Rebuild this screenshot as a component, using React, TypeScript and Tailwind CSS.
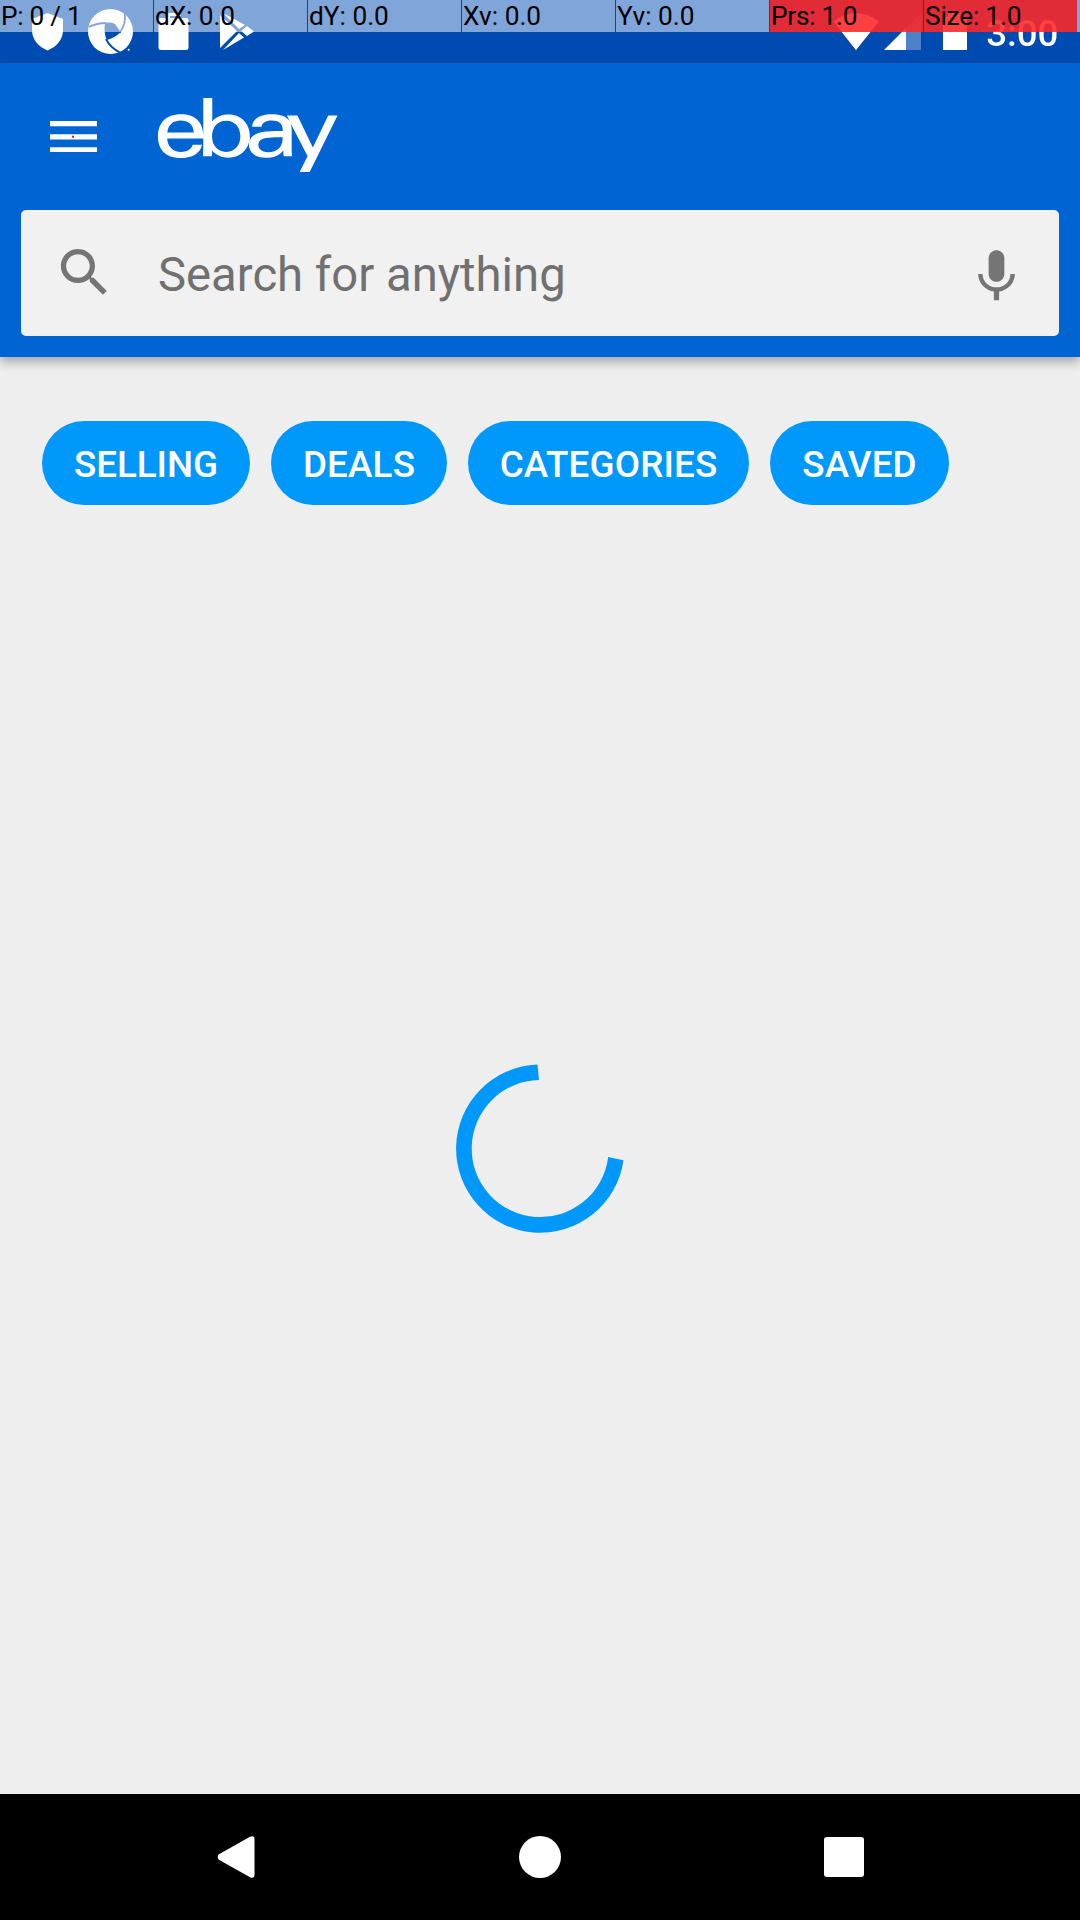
import React from "react";
import { SiEbay } from "react-icons/si";

const metrics = [
  { label: "P: 0 / 1", hot: false, tracking: "tracking-[-0.3px]" },
  { label: "dX: 0.0", hot: false, tracking: "tracking-[-0.1px]" },
  { label: "dY: 0.0", hot: false, tracking: "tracking-normal" },
  { label: "Xv: 0.0", hot: false, tracking: "tracking-normal" },
  { label: "Yv: 0.0", hot: false, tracking: "tracking-normal" },
  { label: "Prs: 1.0", hot: true, tracking: "tracking-[-0.25px]" },
  { label: "Size: 1.0", hot: true, tracking: "tracking-[-0.2px]" },
];

const chips = [
  { label: "SELLING", width: "w-[208px]", tracking: "tracking-normal" },
  { label: "DEALS", width: "w-[176px]", tracking: "tracking-[0.2px]" },
  { label: "CATEGORIES", width: "w-[281px]", tracking: "tracking-[0.15px]" },
  { label: "SAVED", width: "w-[179px]", tracking: "tracking-[0.2px]" },
];

function PointerOverlay() {
  return (
    <div className="absolute inset-x-0 top-0 flex h-8 bg-[#004bb1]">
      {metrics.map((m, i) => (
        <div
          key={m.label}
          className={`${i === 0 ? "w-[153px]" : "ml-px w-[153px]"} h-8 shrink-0 ${m.hot ? "bg-[#e12b36]" : "bg-[#80a5d8]"}`}
        />
      ))}
      <div className="h-8 flex-1 bg-[#80a5d8]" />
    </div>
  );
}

function PointerLabels() {
  return (
    <div className="absolute inset-x-0 top-0 flex h-8 text-[26.25px] leading-8 text-black">
      {metrics.map((m) => (
        <span key={m.label} className={`${m.tracking} w-[154px] shrink-0 whitespace-pre pl-px`}>
          {m.label}
        </span>
      ))}
    </div>
  );
}

function StatusIcons() {
  return (
    <svg className="absolute left-0 top-0 h-[63px] w-[1080px]" viewBox="0 0 1080 63" fill="#fff">
      <defs>
        <linearGradient id="bar" gradientUnits="userSpaceOnUse" x1="0" y1="0" x2="0" y2="64">
          <stop offset="0.5" stopColor="#80a5d8" />
          <stop offset="0.5" stopColor="#004bb1" />
        </linearGradient>
      </defs>
      <path d="M47.5 13L63 19v11c0 9-6 16.500-15.500 20.500C38 46.500 32 39 32 30V19z" />
      <circle cx="110.500" cy="31.500" r="22.500" />
      <path d="M105 22.700Q111 22 115 24L120.700 32Q115 38 106.700 40Q103.500 33 105 22.700z" fill="url(#bar)" />
      <path d="M89 27Q97 23 106 23M124.500 12Q127 23 119.500 33M106 39Q110 47.500 120 52.500" fill="none" stroke="url(#bar)" strokeWidth="1.800" />
      <circle cx="128.700" cy="49.700" r="1" />
      <path d="M166.500 18v-2.500a2.500 2.500 0 0 1 2.500-2.500h9a2.500 2.500 0 0 1 2.500 2.500V18h5.500a2.500 2.500 0 0 1 2.500 2.500v27a2.500 2.500 0 0 1-2.500 2.500h-25a2.500 2.500 0 0 1-2.500-2.500v-27a2.500 2.500 0 0 1 2.500-2.500zM170 18h7v-2h-7z" />
      <path d="M220 15L237 31 220 48zM223 13L245 25 239 29zM241 31L247 26 254 31.500 247 36zM223 50L239 33 244 37.500z" />
      <path d="M833.500 21.500Q856 4.500 879 21.500L856 50z" fill="#ff4042" />
      <path d="M841.700 32h28.700L856 50z" />
      <path d="M921 13v19h-15v-4z" fill="#e8313a" />
      <path d="M902 32h4v-4z" fill="#ff4042" />
      <path d="M884 50l18-18h4v18z" />
      <path d="M906 32h15v18h-15z" fill="#4d81c8" />
      <path d="M943 17h5v-4h14v4h5v15h-24z" fill="#ff4042" />
      <path d="M943 32h24v18h-24z" />
    </svg>
  );
}

export default function App() {
  return (
    <div className="flex h-[1920px] w-[1080px] flex-col overflow-hidden bg-[#eeeeee] font-['Roboto',sans-serif]">
      <div className="relative h-[63px] shrink-0 bg-[#004bb1]">
        <PointerOverlay />
        <StatusIcons />
        <div className="absolute right-[21.5px] top-[12px] bg-linear-to-b from-[#ff4042] from-[20px] to-white to-[20px] bg-clip-text text-[36.75px] font-medium leading-[43px] text-transparent">
          3:00
        </div>
        <PointerLabels />
      </div>

      <header className="relative flex h-[294px] shrink-0 flex-col bg-[#0064d3] shadow-[0_5px_10px_rgba(0,0,0,0.3)]">
        <div className="flex h-[147px] items-start pl-[50px] pt-[35px]">
          <svg className="mt-[22.875px] h-[31.5px] w-[47.25px]" viewBox="0 0 18 12" fill="#fff" role="img" aria-label="Menu">
            <path d="M0 0h18v2H0zM0 5h18v2H0zM0 10h18v2H0z" />
            <path d="M8.400 5.600h.76v.76h-.76z" fill="#f00" />
          </svg>
          <SiEbay className="ml-[60.75px] h-[74px] w-[179.5px] text-white" viewBox="0 7.200 24 9.600" preserveAspectRatio="none" />
        </div>
        <div className="mx-[21px] flex h-[126px] items-center rounded-[5px] bg-[#f1f1f1]">
          <svg className="mb-[2px] ml-[31.5px] size-[63px]" viewBox="0 0 24 24" fill="#757575">
            <path d="M15.500 14h-.79l-.28-.27C15.410 12.590 16 11.110 16 9.500 16 5.910 13.090 3 9.500 3S3 5.910 3 9.500 5.910 16 9.500 16c1.610 0 3.090-.59 4.230-1.570l.27.28v.79l5 4.990L20.490 19l-4.990-5zm-6 0C7.010 14 5 11.990 5 9.500S7.010 5 9.500 5 14 7.010 14 9.500 11.990 14 9.500 14z" />
          </svg>
          <span className="ml-[42.5px] mt-[4px] flex-1 text-[47.25px] leading-[56px] text-[#707070]">
            Search for anything
          </span>
          <svg className="mr-[31px] mt-[6px] size-[63px]" viewBox="0 0 24 24" fill="#757575">
            <path d="M12 14c1.660 0 2.990-1.340 2.990-3L15 5c0-1.660-1.340-3-3-3S9 3.340 9 5v6c0 1.660 1.340 3 3 3zm5.300-3c0 3-2.540 5.100-5.300 5.100S6.700 14 6.700 11H5c0 3.410 2.720 6.230 6 6.720V21h2v-3.280c3.280-.48 6-3.300 6-6.720h-1.700z" />
          </svg>
        </div>
      </header>

      <main className="flex flex-1 flex-col">
        <nav className="flex gap-[21px] pl-[42px] pt-[64px]">
          {chips.map((c) => (
            <button
              key={c.label}
              className={`${c.width} ${c.tracking} h-[84px] rounded-full bg-[#0099fb] pt-[2px] text-center text-[36.75px] font-medium leading-[84px] text-white`}
            >
              {c.label}
            </button>
          ))}
        </nav>
        <svg className="mx-auto mt-[560px] size-[168px] overflow-visible" viewBox="0 0 168 168" fill="#0099fb">
          <path d="M81.500 -.4A84.100 84.100 0 1 0 167.500 95.300L152.200 92A68.500 68.500 0 1 1 83 15.100Z" />
        </svg>
      </main>

      <footer className="flex h-[126px] shrink-0 items-center bg-black">
        <svg className="ml-[217px] h-[42px] w-[38px]" viewBox="0 0 38 42" fill="#fff">
          <path d="M1.500 18.500L33 .8Q37.500-1 37.500 3.500V38.500Q37.500 43 33 41.200L1.500 23.500Q0 21 1.500 18.500Z" />
        </svg>
        <div className="ml-[264px] size-[42px] rounded-full bg-white" />
        <div className="ml-[263px] size-[40px] rounded-[3px] bg-white" />
      </footer>
    </div>
  );
}
